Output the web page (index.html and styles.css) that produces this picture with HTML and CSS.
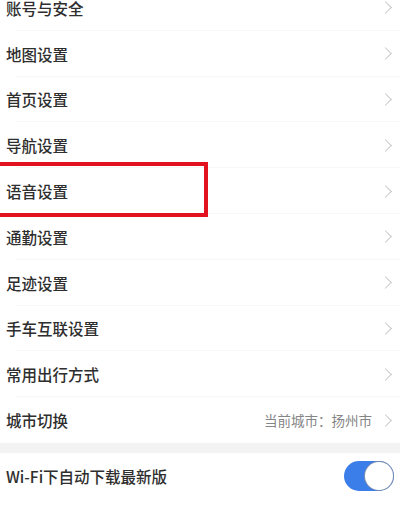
FILE: index.html
```html
<!DOCTYPE html>
<html lang="zh-CN">
<head>
<meta charset="utf-8">
<link rel="stylesheet" href="styles.css">
</head>
<body>
<div class="page">
  <ul class="list">
    <li class="row"><span class="label">账号与安全</span><span class="chev"></span></li>
    <li class="row"><span class="label">地图设置</span><span class="chev"></span></li>
    <li class="row"><span class="label">首页设置</span><span class="chev"></span></li>
    <li class="row"><span class="label">导航设置</span><span class="chev"></span></li>
    <li class="row"><span class="label">语音设置</span><span class="chev"></span></li>
    <li class="row"><span class="label">通勤设置</span><span class="chev"></span></li>
    <li class="row"><span class="label">足迹设置</span><span class="chev"></span></li>
    <li class="row"><span class="label">手车互联设置</span><span class="chev"></span></li>
    <li class="row"><span class="label">常用出行方式</span><span class="chev"></span></li>
    <li class="row last"><span class="label">城市切换</span><span class="value">当前城市：扬州市</span><span class="chev"></span></li>
  </ul>
  <div class="gap"></div>
  <ul class="list">
    <li class="row last"><span class="label">Wi-Fi下自动下载最新版</span><span class="toggle"><span class="knob"></span></span></li>
  </ul>
  <div class="highlight"></div>
</div>
</body>
</html>
```
FILE: styles.css
```css
html, body {
  margin: 0;
  padding: 0;
  background: #ffffff;
}
body {
  width: 400px;
  height: 507px;
  overflow: hidden;
  font-family: "Noto Sans CJK SC", "Noto Sans", sans-serif;
  color: #333333;
}
.page {
  position: relative;
  margin-top: -15px;
}
.list {
  list-style: none;
  margin: 0;
  padding: 0;
}
.row {
  display: flex;
  align-items: center;
  height: 45.8px;
  padding: 0 0 0 6px;
  box-sizing: border-box;
  position: relative;
}
.row::after {
  content: "";
  position: absolute;
  left: 16px;
  right: 0;
  bottom: 0;
  height: 1px;
  background: #f7f7f7;
}
.row.last::after {
  display: none;
}
.label {
  flex: 1;
  font-size: 15.5px;
  font-weight: 500;
  color: #2e2e2e;
}
.value {
  font-size: 13.5px;
  color: #858585;
  margin-right: 9px;
}
.chev {
  width: 8px;
  height: 8px;
  border-top: 1.4px solid #c8c8c8;
  border-right: 1.4px solid #c8c8c8;
  transform: rotate(45deg);
  margin-right: 10px;
}
.gap {
  height: 10px;
  background: #f3f3f3;
}
.toggle {
  width: 50px;
  height: 30px;
  border-radius: 15px;
  background: #3b7de9;
  position: relative;
  margin-right: 6px;
}
.knob {
  position: absolute;
  right: 1px;
  top: 1px;
  width: 28px;
  height: 28px;
  border-radius: 50%;
  background: #ffffff;
  box-shadow: 0 0 0 1px #7c8db0;
}
.highlight {
  position: absolute;
  left: -10px;
  top: 177px;
  width: 218px;
  height: 55px;
  box-sizing: border-box;
  border: 4px solid #e2131f;
}
```
